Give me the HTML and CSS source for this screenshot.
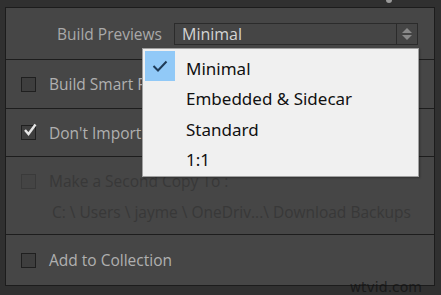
FILE: index.html
```html
<!DOCTYPE html>
<html lang="en">
<head>
    <meta charset="UTF-8">
    <title>Build Previews</title>
    <link rel="stylesheet" href="styles.css">
</head>
<body>
    <div class="topnub"></div>
    <div class="panel">
        <div class="section previews">
            <span class="label">Build Previews</span>
            <div class="select">
                <span class="value">Minimal</span>
                <span class="spinner">
                    <svg width="12" height="14" viewBox="0 0 12 14">
                        <path d="M1 6 L6 1 L11 6 Z" fill="#8a8a8a"/>
                        <path d="M1 8 L6 13 L11 8 Z" fill="#8a8a8a"/>
                    </svg>
                </span>
            </div>
        </div>
        <div class="section row">
            <span class="box"></span>
            <span class="text">Build Smart Previews</span>
        </div>
        <div class="section row">
            <span class="box">
                <svg width="14" height="14" viewBox="0 0 14 14">
                    <path d="M2 7 L5.5 11 L12.5 1.5" fill="none" stroke="#e6e6e6" stroke-width="2.4"/>
                </svg>
            </span>
            <span class="text">Don't Import Suspected Duplicates</span>
        </div>
        <div class="section copy">
            <div class="row inner">
                <span class="box dim"></span>
                <span class="text dimtext">Make a Second Copy To :</span>
            </div>
            <div class="path">C: \ Users \ jayme \ OneDriv...\ Download Backups</div>
        </div>
        <div class="section row last">
            <span class="box"></span>
            <span class="text">Add to Collection</span>
        </div>
    </div>

    <div class="menu">
        <div class="item checked">
            <span class="check">
                <svg width="16" height="12" viewBox="0 0 16 12">
                    <path d="M1.5 6 L6 10.5 L14.5 1.5" fill="none" stroke="#1f3b57" stroke-width="2"/>
                </svg>
            </span>
            <span>Minimal</span>
        </div>
        <div class="item"><span class="check"></span><span>Embedded &amp; Sidecar</span></div>
        <div class="item"><span class="check"></span><span>Standard</span></div>
        <div class="item"><span class="check"></span><span>1:1</span></div>
    </div>

    <div class="mark">wtvid.com</div>
</body>
</html>
```

FILE: styles.css
```css
body {
    margin: 0;
    background-color: #303030;
    font-family: "Open Sans", "Noto Sans", sans-serif;
    width: 441px;
    height: 295px;
    overflow: hidden;
    position: relative;
}

.topnub {
    position: absolute;
    left: 386px;
    top: 0;
    width: 6px;
    height: 3px;
    background: #9a9a9a;
    border-radius: 0 0 3px 3px;
}

.panel {
    margin: 7px 6px 0 5px;
    border: 1px solid #1c1c1c;
    background-color: #464646;
    height: 277px;
}

.section {
    border-bottom: 1px solid #1d1d1d;
    box-sizing: border-box;
}

.previews {
    height: 52px;
    display: flex;
    align-items: center;
    padding-left: 51px;
    padding-top: 1px;
}

.label {
    color: #a9a9a9;
    font-size: 15.5px;
    width: 117px;
}

.select {
    display: flex;
    width: 244px;
    height: 22px;
    border: 1px solid #2b2b2b;
    background: #454545;
    box-sizing: border-box;
}

.value {
    flex: 1;
    color: #d4d4d4;
    font-size: 16px;
    line-height: 20px;
    padding-left: 7px;
}

.spinner {
    width: 20px;
    border-left: 1px solid #2b2b2b;
    display: flex;
    align-items: center;
    justify-content: center;
}

.row {
    display: flex;
    align-items: center;
    padding-left: 15px;
    height: 49px;
}

.section.row:nth-child(3) {
    height: 48px;
}

.box {
    width: 13px;
    height: 13px;
    border: 1px solid #1f1f1f;
    background: #3e3e3e;
    margin-right: 13px;
    position: relative;
}

.box svg {
    position: absolute;
    left: 1px;
    top: -3px;
}

.text {
    color: #b0b0b0;
    font-size: 15.5px;
}

.copy {
    height: 78px;
}

.inner {
    height: 46px;
    padding-top: 2px;
    box-sizing: border-box;
}

.box.dim {
    border-color: #3a3a3a;
    background: #444;
}

.dimtext,
.path {
    color: #383838;
}

.path {
    font-size: 15.5px;
    padding-left: 46px;
    margin-top: -2px;
}

.last {
    height: 50px;
    border-bottom: none;
}

.menu {
    position: absolute;
    left: 142px;
    top: 48px;
    width: 277px;
    height: 129px;
    background: #f0f0f0;
    border: 1px solid #a0a0a0;
    box-sizing: border-box;
    padding: 2px;
    box-shadow: 1px 1px 2px rgba(0, 0, 0, 0.3);
    font-family: "Noto Sans", "Open Sans", sans-serif;
}

.item {
    display: flex;
    align-items: center;
    height: 30.5px;
    color: #111;
    font-size: 17px;
}

.item > span:last-child {
    position: relative;
    top: 2px;
}

.check {
    width: 30px;
    height: 30px;
    margin-right: 11px;
    display: flex;
    align-items: center;
    justify-content: center;
}

.checked .check {
    background: #91c9f7;
}

.mark {
    position: absolute;
    right: 19px;
    bottom: 0;
    font-family: "DejaVu Sans", sans-serif;
    font-size: 14px;
    color: #111;
    opacity: 0.7;
}
```
